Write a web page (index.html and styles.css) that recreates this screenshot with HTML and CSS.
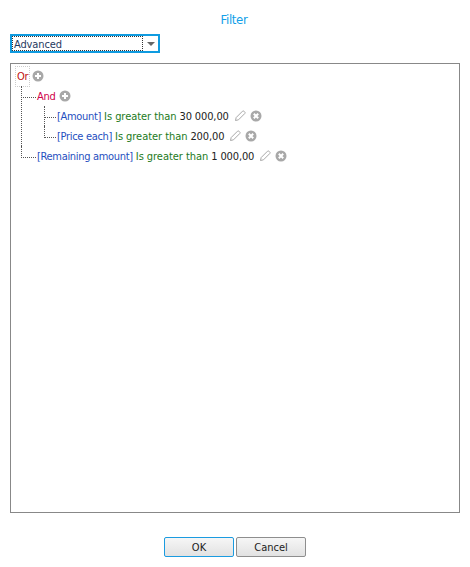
FILE: index.html
```html
<!DOCTYPE html>
<html lang="en">

<head>
    <meta charset="UTF-8">
    <meta name="viewport" content="width=device-width, initial-scale=1.0">
    <title>Filter</title>
    <link rel="stylesheet" href="styles.css">
</head>

<body>
    <h1 class="title">Filter</h1>

    <div class="combo">
        <span class="combo-value">Advanced</span>
        <span class="combo-arrow"></span>
    </div>

    <div class="panel">
        <ul class="tree">
            <li>
                <div class="row">
                    <span class="group group-focus">Or</span>
                    <svg class="icon add" viewBox="0 0 12 12"><circle cx="6" cy="6" r="5.5" fill="#a8a8a8"/><path d="M6 3v6M3 6h6" stroke="#fff" stroke-width="2"/></svg>
                </div>
                <ul>
                    <li>
                        <div class="row">
                            <span class="group">And</span>
                            <svg class="icon add" viewBox="0 0 12 12"><circle cx="6" cy="6" r="5.5" fill="#a8a8a8"/><path d="M6 3v6M3 6h6" stroke="#fff" stroke-width="2"/></svg>
                        </div>
                        <ul>
                            <li>
                                <div class="row">
                                    <span class="field">[Amount]</span>
                                    <span class="op">Is greater than</span>
                                    <span class="val">30 000,00</span>
                                    <svg class="icon edit" viewBox="0 0 12 12"><path d="M1.5 10.5l.7-3L8.5 1.200a1 1 0 0 1 1.400 0l.9.9a1 1 0 0 1 0 1.400L4.500 9.800z" fill="#fff" stroke="#a8a8a8"/></svg>
                                    <svg class="icon" viewBox="0 0 12 12"><circle cx="6" cy="6" r="5.500" fill="#a8a8a8"/><path d="M3.800 3.800l4.400 4.400M8.200 3.800L3.800 8.200" stroke="#fff" stroke-width="2"/></svg>
                                </div>
                            </li>
                            <li>
                                <div class="row">
                                    <span class="field">[Price each]</span>
                                    <span class="op">Is greater than</span>
                                    <span class="val">200,00</span>
                                    <svg class="icon edit" viewBox="0 0 12 12"><path d="M1.5 10.5l.7-3L8.5 1.200a1 1 0 0 1 1.400 0l.9.9a1 1 0 0 1 0 1.400L4.500 9.800z" fill="#fff" stroke="#a8a8a8"/></svg>
                                    <svg class="icon" viewBox="0 0 12 12"><circle cx="6" cy="6" r="5.500" fill="#a8a8a8"/><path d="M3.800 3.800l4.400 4.400M8.200 3.800L3.800 8.200" stroke="#fff" stroke-width="2"/></svg>
                                </div>
                            </li>
                        </ul>
                    </li>
                    <li>
                        <div class="row">
                            <span class="field">[Remaining amount]</span>
                            <span class="op">Is greater than</span>
                            <span class="val">1 000,00</span>
                            <svg class="icon edit" viewBox="0 0 12 12"><path d="M1.5 10.5l.7-3L8.5 1.200a1 1 0 0 1 1.400 0l.9.9a1 1 0 0 1 0 1.400L4.500 9.800z" fill="#fff" stroke="#a8a8a8"/></svg>
                            <svg class="icon" viewBox="0 0 12 12"><circle cx="6" cy="6" r="5.500" fill="#a8a8a8"/><path d="M3.800 3.800l4.400 4.400M8.200 3.800L3.800 8.200" stroke="#fff" stroke-width="2"/></svg>
                        </div>
                    </li>
                </ul>
            </li>
        </ul>
    </div>

    <div class="buttons">
        <button type="button" class="btn btn-default">OK</button>
        <button type="button" class="btn">Cancel</button>
    </div>
</body>

</html>
```

FILE: styles.css
```css
* {
    margin: 0;
    padding: 0;
    box-sizing: border-box;
}

body {
    font-family: "DejaVu Sans", sans-serif;
    font-stretch: condensed;
    font-size: 11px;
    letter-spacing: -0.12px;
    color: #222;
    background: #fff;
    padding: 10px 10px 0;
}

.title {
    font-size: 13px;
    font-weight: normal;
    line-height: 19px;
    letter-spacing: -0.3px;
    padding-right: 2px;
    color: #12a0e8;
    text-align: center;
}

/* Combo box */
.combo {
    display: flex;
    width: 150px;
    height: 19px;
    margin-top: 5px;
    border: 2px solid #0f9be0;
}

.combo-value {
    flex: 1;
    padding: 1px 0 0 1px;
    line-height: 13px;
    border: 1px dotted #333;
    color: #1f3a5f;
}

.combo-arrow {
    width: 15px;
    padding-left: 1px;
    display: flex;
    align-items: center;
    justify-content: center;
}

.combo-arrow::after {
    content: "";
    border-left: 4px solid transparent;
    border-right: 4px solid transparent;
    border-top: 4px solid #666;
}

/* Tree panel */
.panel {
    height: 450px;
    margin-top: 10px;
    padding: 2px 5px;
    border: 1px solid #888;
}

.tree,
.tree ul {
    list-style: none;
}

.tree ul li {
    position: relative;
    margin-left: 5px;
    padding-left: 16px;
}

.tree ul ul li {
    margin-left: 7px;
    padding-left: 13px;
}

.tree ul li::before {
    content: "";
    position: absolute;
    left: 0;
    top: 0;
    width: 14px;
    height: 11px;
    border-left: 1px dotted #555;
    border-bottom: 1px dotted #555;
}

.tree ul ul li::before {
    width: 11px;
}

.tree ul li:not(:last-child)::after {
    content: "";
    position: absolute;
    left: 0;
    top: 0;
    bottom: 0;
    border-left: 1px dotted #555;
}

.row {
    display: flex;
    align-items: center;
    gap: 3px;
    height: 20px;
    white-space: nowrap;
}

.group {
    color: #d0004a;
    letter-spacing: -0.3px;
}

.group-focus {
    color: #c01010;
    outline: 1px dotted #ccc;
    outline-offset: 1px;
    margin-left: 1px;
    padding: 2px 0;
}

.field {
    color: #1f4fc0;
    letter-spacing: -0.32px;
}

.op {
    color: #1c7a1c;
    letter-spacing: -0.05px;
}

.val {
    color: #222;
}

.icon {
    width: 12px;
    height: 12px;
    margin-left: 2px;
}

.add {
    margin-left: 1px;
}

.edit + .icon {
    margin-left: 1px;
}

/* Dialog buttons */
.buttons {
    display: flex;
    justify-content: center;
    gap: 2px;
    margin-top: 24px;
}

.btn {
    width: 70px;
    height: 20px;
    font-family: inherit;
    font-stretch: inherit;
    font-size: 11px;
    color: #222;
    background: linear-gradient(#f6f6f6, #e2e2e2);
    border: 1px solid #8e8e8e;
    border-radius: 2px;
}

.btn-default {
    border-color: #1b9be0;
}
```
